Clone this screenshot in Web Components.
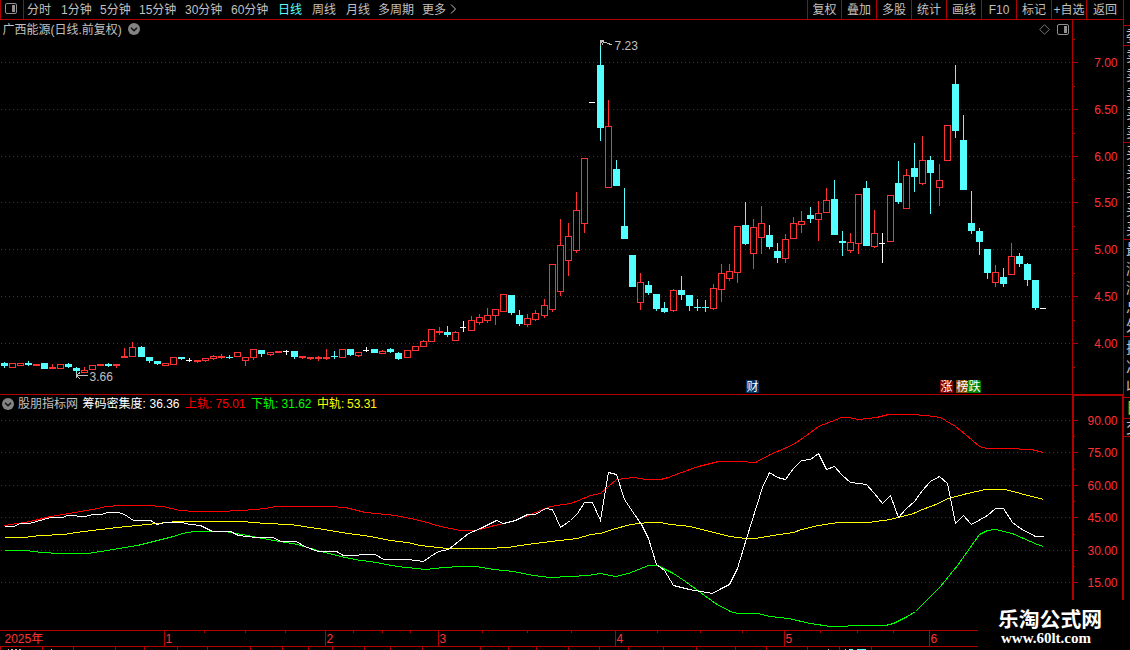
<!DOCTYPE html>
<html lang="zh-CN">
<head>
<meta charset="utf-8">
<title>广西能源</title>
<style>
  html, body { margin: 0; background: #000; }
  body {
    width: 1130px;
    height: 650px;
    overflow: hidden;
    font: 12px/18px "Liberation Sans", "Noto Sans CJK SC", sans-serif;
    color: #c0c0c0;
    --line: #b00000;
    --up: #ff3232;
    --down: #54ffff;
  }
</style>
</head>
<body>
<stock-terminal></stock-terminal>

<script>
(function() {
  'use strict';

  // x, high, body top, body bottom, low, kind (r = up, c = down, w = flat)
  const CANDLES = `
    4 362 363 366 368 c|12 363 363 368 368 r|20 363 363 366 366 r|28 361 363 365 366 c
    36 364 364 366 366 r|44 363 363 369 369 c|52 364 367 369 369 r|60 364 364 369 369 r
    68 363 364 367 368 c|76 367 368 371 374 c|84 367 370 373 373 r|92 365 365 370 370 r
    100 364 364 366 366 r|108 363 364 366 367 c|116 364 364 366 368 r|124 348 356 358 358 r
    132 342 347 357 357 r|141 346 347 357 357 c|149 357 357 361 363 c|157 361 361 364 365 c
    165 363 363 366 366 r|173 357 357 365 365 r|181 357 357 359 360 c|189 358 360 361 362 w
    197 360 360 362 363 r|205 358 358 361 362 r|213 355 356 359 360 r|221 354 356 358 359 r
    229 355 357 358 359 c|237 352 352 357 357 r|245 357 357 361 366 r|253 349 349 358 360 r
    261 350 350 354 357 c|270 352 352 355 356 r|278 351 351 353 353 r|286 350 351 352 355 w
    294 351 351 357 359 c|302 356 356 358 359 r|310 357 357 359 360 r|318 356 357 359 361 r
    326 349 357 359 360 r|334 351 356 357 359 c|342 349 349 358 358 r|350 349 349 355 356 c
    358 352 352 356 357 r|366 347 350 351 352 w|374 349 349 353 353 c|382 350 351 354 354 r
    390 348 349 352 353 c|398 352 353 359 360 c|407 350 350 358 358 r|415 346 346 351 351 r
    423 340 341 347 347 r|431 329 329 342 342 r|439 327 331 333 335 r|447 326 332 335 337 c
    455 331 332 341 341 r|463 321 327 328 332 w|471 316 320 331 331 r|479 314 317 323 325 r
    487 308 315 321 323 r|495 309 309 316 325 r|503 294 294 312 312 r|511 295 295 313 315 c
    519 310 315 324 326 c|527 314 318 325 327 r|535 310 313 320 321 r|544 299 305 316 318 r
    552 264 264 310 312 r|560 219 245 292 296 r|568 223 236 261 276 r|576 192 210 251 253 r
    584 158 158 224 233 r|592 102 102 103 103 w|600 40 65 128 141 c|608 100 126 188 188 r
    616 160 169 186 186 c|624 188 226 239 239 c|632 255 255 287 287 c|640 273 282 303 310 r
    648 281 285 293 295 c|656 294 294 309 311 c|664 302 308 312 313 c|673 289 290 311 312 r
    681 276 290 295 300 c|689 295 295 306 311 c|697 299 307 308 311 c|705 300 307 308 312 c
    713 284 288 309 310 r|721 264 273 290 302 r|729 264 271 279 281 r|737 226 226 273 283 r
    745 202 225 244 245 c|753 219 227 254 269 r|761 206 223 238 254 r|769 225 235 247 249 c
    777 243 251 258 263 c|785 234 239 259 263 r|793 217 223 239 239 r|801 211 221 225 233 r
    810 207 215 219 223 c|818 201 213 220 241 r|826 188 200 213 213 r|834 180 199 235 235 c
    842 231 241 243 256 c|850 233 242 251 253 r|858 194 194 244 254 r|866 181 188 246 246 c
    874 210 233 247 248 r|882 233 243 244 263 w|890 195 195 242 242 r|898 161 183 202 204 c
    906 169 175 209 209 r|914 143 168 177 192 c|922 136 160 184 185 r|930 156 160 173 214 c
    939 164 180 188 206 r|947 125 125 161 161 r|955 65 84 131 138 c|963 115 140 190 190 c
    971 191 223 231 234 c|979 228 231 242 255 c|987 249 249 273 279 c|995 265 272 283 287 r
    1003 268 277 284 287 c|1011 243 256 275 275 r|1019 253 256 264 267 c|1027 263 264 280 286 c
    1035 280 280 308 310 c|1043 308 308 309 309 w`
    .trim().split(/[|\n]/).map((row) => {
      const parts = row.trim().split(' ');
      return [...parts.slice(0, 5).map(Number), parts[5]];
    });

  const CURVES = [
    ['#f00', '4,525 24,522 34,520 50,516 63,514 80,511 97,508 106,506 120,505 146,505 162,506 180,510 194,511 217,511 242,510 265,508 275,506 330,506 345,507 365,512 395,515 410,518 423,521 440,526 460,530 475,530 490,526 515,520 530,514 550,506 570,503 578,500 590,495 600,493 616,479 633,477 646,479 660,479 668,477 681,472 698,466 718,461 740,461 755,462 770,454 793,444 806,435 818,426 831,421 841,417 848,417 858,419 876,417 888,414 910,414 926,415 940,417 955,426 965,434 979,446 986,448 1006,448 1031,449 1043,452'],
    ['#ff0', '4,537 23,537 40,535 63,534 83,531 117,527 147,524 177,521 193,521 242,521 265,523 290,524 317,528 348,533 370,536 390,540 407,542 420,545 447,548 487,548 507,547 527,544 550,541 577,538 590,534 600,533 612,529 630,524 648,522 660,522 670,524 690,526 713,532 730,536 745,538 755,538 772,535 793,532 801,529 818,525 838,522 868,522 890,519 913,513 922,509 933,505 948,498 967,493 985,489 1005,489 1020,493 1043,499'],
    ['#0f0', '4,550 25,550 42,552 58,553 87,553 113,549 137,545 157,540 173,536 182,533 193,531 225,531 247,535 273,540 297,544 317,550 340,556 360,560 370,561 397,566 425,569 443,567 460,566 475,566 493,569 513,571 533,575 550,577 570,576 587,575 600,573 615,576 628,573 648,565 657,565 663,568 673,573 685,581 700,592 715,603 730,611 737,613 757,613 770,616 788,618 810,623 830,626 845,626 850,625 885,625 893,623 907,616 915,611 940,586 957,565 979,534 987,530 995,529 1012,533 1023,538 1037,544 1043,546'],
    ['#fff', '4,526 13,526 20,523 29,523 50,517 62,517 67,515 85,516 92,514 101,514 107,512 118,512 124,514 133,520 150,520 157,524 164,522 181,522 190,524 200,525 212,531 230,531 238,535 256,537 272,537 281,541 296,541 304,546 318,551 336,551 343,555 375,554 383,559 408,559 423,561 430,556 438,551 448,549 458,541 468,533 480,528 496,520 503,523 515,520 527,514 535,514 545,508 552,509 560,527 570,520 577,513 584,502 592,502 600,520 608,472 616,474 624,499 632,511 641,524 648,538 656,564 664,570 673,585 689,589 712,593 721,588 729,584 737,568 746,538 762,487 769,472 777,477 785,479 793,468 801,460 810,459 818,453 826,469 834,466 842,475 850,482 866,484 874,493 882,503 890,495 898,517 906,508 914,501 922,490 930,481 939,476 947,483 955,523 963,515 971,524 987,515 995,508 1003,508 1012,522 1020,528 1035,536 1043,536']
  ];

  const rect = (x, y, w, h, fill) =>
    `<rect x="${x}" y="${y}" width="${w}" height="${h}" fill="${fill}"/>`;

  // Dotted guide lines plus the price scale on the right
  function scale(rows, minors) {
    return rows.map(([y, label]) => `
      <path d="M1 ${y + 0.5}H1072" stroke="#b40000" stroke-dasharray="1 3"/>
      ${rect(1073, y, 5, 1, 'var(--line)')}
      <text x="1117.5" y="${y + 5}" text-anchor="end">${label}</text>`).join('') +
      minors.map((y) => rect(1073, y, 2, 1, 'var(--line)')).join('');
  }

  function candle([x, high, top, bottom, low, kind]) {
    const color = { r: 'var(--up)', c: 'var(--down)', w: '#fff' }[kind];
    let out = '';
    if (top > high) out += rect(x, high, 1, top - high, color);
    if (low > bottom) out += rect(x, bottom, 1, low - bottom, color);
    if (kind === 'r' && bottom - top > 2) {
      out += `<rect x="${x - 2.5}" y="${top + 0.5}" width="6" height="${bottom - top - 1}" fill="none" stroke="${color}"/>`;
    } else {
      out += rect(x - 3, top, kind === 'w' ? 6 : 7, bottom - top, color);
    }
    return out;
  }

  const SVG_STYLE = `
    svg { display: block; shape-rendering: crispEdges; }
    text { font: 12px "Liberation Sans", "Noto Sans CJK SC", sans-serif; fill: var(--up); }
    text.note { fill: #c0c0c0; }
    .arrow { fill: none; stroke: #c0c0c0; }
  `;

  class BaseElement extends HTMLElement {
    constructor() {
      super();
      this.attachShadow({ mode: 'open' });
    }

    connectedCallback() {
      this.shadowRoot.innerHTML = this.render();
    }
  }

  class FoldButton extends BaseElement {
    render() {
      return `
        <style>
          :host { display: block; width: 12px; height: 12px; }
          svg { display: block; }
        </style>
        <svg width="12" height="12" viewBox="0 0 12 12">
          <circle cx="6" cy="6" r="6" fill="#848484"/>
          <path d="M3 4.7 6 7.7 9 4.7" fill="none" stroke="#111" stroke-width="1.5"/>
        </svg>
      `;
    }
  }

  class PanelIcon extends BaseElement {
    render() {
      return `
        <style>
          :host { display: block; width: 12px; height: 11px; }
          svg { display: block; }
        </style>
        <svg width="12" height="11" viewBox="0 0 12 11">
          <rect x=".5" y=".5" width="11" height="10" rx="1.5" fill="none" stroke="#909090"/>
          <rect x="7" y="2" width="3" height="7" fill="#909090"/>
        </svg>
      `;
    }
  }

  class ToolBar extends BaseElement {
    render() {
      const periods = [['分时', 34], ['1分钟', 39], ['5分钟', 39], ['15分钟', 46], ['30分钟', 46], ['60分钟', 47],
        ['日线', 34], ['周线', 34], ['月线', 32], ['多周期', 44], ['更多', 28]];
      const tools = [['复权', 33], ['叠加', 34], ['多股', 34], ['统计', 34], ['画线', 34], ['F10', 34],
        ['标记', 34], ['+自选', 34], ['返回', 36]];
      return `
        <style>
          :host {
            display: flex;
            height: 19px;
            border-bottom: 1px solid var(--line);
            line-height: 20px;
            white-space: nowrap;
          }
          .toggle {
            display: flex;
            padding: 3px 0 0 4px;
            box-sizing: border-box;
            width: 24px;
            height: 19px;
            border: solid var(--line);
            border-width: 0 1px;
            margin-right: 3px;
          }
          .period { flex: none; }
          .active { color: var(--down); }
          .more { margin-top: 4px; height: 10px; }
          .tools { display: flex; margin-left: auto; }
          .tool { border-left: 1px solid var(--line); text-align: center; height: 19px; }
        </style>
        <div class="toggle"><panel-icon></panel-icon></div>
        ${periods.map(([name, width]) =>
          `<span class="period${name === '日线' ? ' active' : ''}" style="width:${width}px">${name}</span>`).join('')}
        <svg class="more" width="8" height="10"><path d="M1 .5 5.5 5 1 9.5" fill="none" stroke="#c0c0c0"/></svg>
        <div class="tools">
          ${tools.map(([name, width]) => `<span class="tool" style="width:${width}px">${name}</span>`).join('')}
        </div>
      `;
    }
  }

  // Header laid over a drawing, both in the same grid cell
  class ChartPane extends BaseElement {
    render() {
      return `
        <style>
          :host { display: grid; }
          ::slotted(*), header { grid-area: 1 / 1; }
          header { display: flex; z-index: 1; height: 18px; white-space: nowrap; }
        </style>
        <header><slot name="header"></slot></header>
        <slot></slot>
      `;
    }
  }

  class PriceHeader extends BaseElement {
    render() {
      return `
        <style>
          :host { display: flex; align-items: center; width: 1069px; height: 18px; padding-left: 2.5px; box-sizing: border-box; }
          .name { width: 125px; padding-top: 2px; }
          .side { display: flex; align-items: center; gap: 7px; margin-left: auto; }
          svg { display: block; }
        </style>
        <span class="name">广西能源(日线.前复权)</span>
        <fold-button></fold-button>
        <div class="side">
          <svg width="11" height="11"><path d="M5.5 .7 10.3 5.5 5.5 10.3 .7 5.5Z" fill="none" stroke="#777"/></svg>
          <panel-icon></panel-icon>
        </div>
      `;
    }
  }

  class PriceChart extends BaseElement {
    render() {
      const rows = [[62, '7.00'], [109, '6.50'], [156, '6.00'], [202, '5.50'], [249, '5.00'], [296, '4.50'], [343, '4.00']];
      const badge = (x, w, fill, name) => `
        <path d="M${x} 380h${w - 2}l2 2v11h${-w}Z" fill="${fill}"/>
        <text x="${x + 0.5}" y="391" style="fill:#fff">${name}</text>`;
      return `
        <style>:host { display: block; } ${SVG_STYLE}</style>
        <svg width="1123" height="376" viewBox="0 20 1123 376">
          ${scale(rows, [39, 86, 133, 179, 226, 273, 320, 367])}
          ${rect(1072, 20, 1, 375, 'var(--line)')}
          ${rect(0, 394, 1123, 1, 'var(--line)')}
          ${rect(1072, 395, 51, 1, 'var(--line)')}
          ${CANDLES.map(candle).join('')}
          <path class="arrow" d="M600.5 46V40.5H604M601 41.5 606 42.5 612 45M601 41.5 603 44.5"/>
          <text class="note" x="614.5" y="50">7.23</text>
          <path class="arrow" d="M88 375.5H76.5M80 372.5 76.5 375.5 80 379M76.5 373V378"/>
          <text class="note" x="89.5" y="381">3.66</text>
          ${badge(746, 13, '#003366', '财')}
          ${badge(940, 13, '#800000', '涨')}
          ${badge(956, 12, '#8a4600', '榜')}
          ${badge(968, 13, '#008000', '跌')}
        </svg>
      `;
    }
  }

  class IndicatorHeader extends BaseElement {
    render() {
      const items = [['筹码密集度:', 67, '36.36', 35.5, '#fff'], ['上轨:', 30.5, '75.01', 35.5, '#f00'],
        ['下轨:', 30.5, '31.62', 35.5, '#0f0'], ['中轨:', 30, '53.31', 36, '#ff0']];
      return `
        <style>
          :host { display: flex; align-items: center; height: 15px; padding-left: 2px; }
          .title { margin-left: 4px; width: 64.5px; }
          .item { display: flex; }
        </style>
        <fold-button></fold-button>
        <span class="title">股朋指标网</span>
        ${items.map(([name, w, value, vw, color]) => `
          <div class="item" style="color:${color}">
            <span style="width:${w}px">${name}</span><span style="width:${vw}px">${value}</span>
          </div>`).join('')}
      `;
    }
  }

  class IndicatorChart extends BaseElement {
    render() {
      const rows = [[420, '90.00'], [452, '75.00'], [485, '60.00'], [517, '45.00'], [550, '30.00'], [582, '15.00']];
      return `
        <style>:host { display: block; } ${SVG_STYLE}</style>
        <svg width="1123" height="234" viewBox="0 396 1123 234">
          ${scale(rows, [436, 469, 501, 534, 566])}
          ${rect(1072, 396, 2, 234, 'var(--line)')}
          ${rect(1122, 396, 1, 234, 'var(--line)')}
          <g transform="translate(.5 .5)" fill="none">
            ${CURVES.map(([color, points]) => `<polyline points="${points}" stroke="${color}"/>`).join('')}
          </g>
        </svg>
      `;
    }
  }

  class TimeAxis extends BaseElement {
    render() {
      const months = [[164, '1'], [325, '2'], [438, '3'], [615, '4'], [784, '5'], [929, '6']];
      const weeks = [204, 245, 285, 353, 382, 410, 482, 527, 571, 657, 700, 742, 820, 857, 893];
      const tabs = [0, 42, 73, 115, 144, 177, 207, 250, 282, 308, 332, 364, 390, 422, 480, 508, 536, 568,
        599, 628, 663, 696, 735, 766, 807, 839, 871];
      // upper edges of the tab captions cut off by the window bottom
      const marks = [[8, 1], [11, 2], [15, 2], [19, 2], [51, 1], [828, 1], [845, 1]];
      return `
        <style>:host { display: block; } ${SVG_STYLE}</style>
        <svg width="1123" height="20" viewBox="0 630 1123 20">
          ${rect(0, 630, 1123, 1, 'var(--line)')}
          ${rect(0, 646, 1123, 1, 'var(--line)')}
          ${months.map(([x, name]) => rect(x, 630, 1, 17, 'var(--line)') +
            `<text x="${x + 1.5}" y="643">${name}</text>`).join('')}
          ${weeks.map((x) => rect(x, 631, 1, 2, 'var(--line)')).join('')}
          ${tabs.map((x) => rect(x, 647, 1, 3, 'var(--line)')).join('')}
          ${marks.map(([x, w]) => rect(x, 649, w, 1, '#c0c0c0')).join('')}
          ${rect(849, 649, 4, 1, 'var(--down)')}
          ${rect(857, 649, 9, 1, 'var(--down)')}
          <text x="4.5" y="643">2025年</text>
        </svg>
      `;
    }
  }

  // Quote panel, only its left edge fits in the window
  class QuoteStrip extends BaseElement {
    render() {
      const groups = [[20, '委'], [97, '卖卖卖卖卖'], [97, '买买买买买'], [97, '最涨涨总外'], [61, '换净收'], [21, '日'], [19, '交']];
      return `
        <style>
          :host { display: flex; flex-direction: column; box-sizing: border-box; padding-top: 25px; width: 7px; overflow: hidden; font-size: 15px; }
          .group {
            display: flex;
            flex: none;
            flex-direction: column;
            justify-content: space-evenly;
            box-sizing: border-box;
            padding-left: 2px;
            border-top: 1px solid var(--line);
            line-height: 18px;
          }
          .group:nth-of-type(6) { color: #c8c800; }
          .group:last-child { height: 20px; border-bottom: 1px solid var(--line); }
        </style>
        ${groups.map(([height, chars]) => `
          <div class="group" style="height:${height}px">
            ${[...chars].map((c) => `<span>${c}</span>`).join('')}
          </div>`).join('')}
      `;
    }
  }

  class SiteMark extends BaseElement {
    render() {
      return `
        <style>
          :host {
            display: flex;
            flex-direction: column;
            box-sizing: border-box;
            width: 152px;
            height: 50px;
            padding: 7px 0 0 20px;
            background: #000;
            color: #fff;
            font-weight: bold;
            white-space: nowrap;
          }
          .name { font: bold 20.8px/22px "Noto Sans CJK SC", sans-serif; }
          .url { font: bold 15px/19px "Liberation Serif", serif; padding-left: 3px; }
        </style>
        <span class="name">乐淘公式网</span>
        <span class="url">www.60lt.com</span>
      `;
    }
  }

  class StockTerminal extends BaseElement {
    render() {
      return `
        <style>
          :host { display: flex; position: relative; width: 1130px; height: 650px; overflow: hidden; }
          main { width: 1123px; border-right: 1px solid var(--line); }
          quote-strip { flex: 1; }
          site-mark { position: absolute; right: 0; bottom: 0; z-index: 2; }
        </style>
        <main>
          <tool-bar></tool-bar>
          <chart-pane>
            <price-header slot="header"></price-header>
            <price-chart></price-chart>
          </chart-pane>
          <chart-pane>
            <indicator-header slot="header"></indicator-header>
            <indicator-chart></indicator-chart>
          </chart-pane>
          <time-axis></time-axis>
        </main>
        <quote-strip></quote-strip>
        <site-mark></site-mark>
      `;
    }
  }

  customElements.define('fold-button', FoldButton);
  customElements.define('panel-icon', PanelIcon);
  customElements.define('tool-bar', ToolBar);
  customElements.define('chart-pane', ChartPane);
  customElements.define('price-header', PriceHeader);
  customElements.define('price-chart', PriceChart);
  customElements.define('indicator-header', IndicatorHeader);
  customElements.define('indicator-chart', IndicatorChart);
  customElements.define('time-axis', TimeAxis);
  customElements.define('quote-strip', QuoteStrip);
  customElements.define('site-mark', SiteMark);
  customElements.define('stock-terminal', StockTerminal);
})();
</script>
</body>
</html>
